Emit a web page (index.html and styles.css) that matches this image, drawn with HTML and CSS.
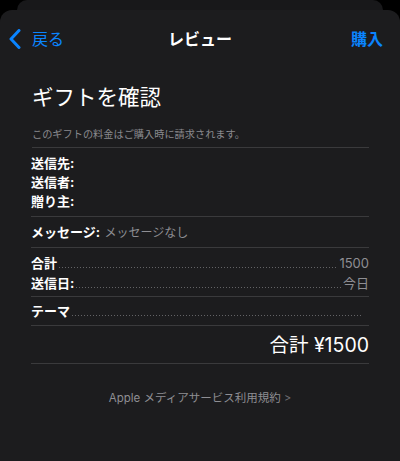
FILE: index.html
```html
<!DOCTYPE html>
<html lang="ja">
<head>
<meta charset="utf-8">
<link rel="stylesheet" href="styles.css">
</head>
<body>
<div class="backcard"></div>
<div class="sheet">
  <nav class="nav">
    <div class="back">
      <svg class="chev" width="12" height="20" viewBox="0 0 12 20"><path d="M10 1.5 L2 10 L10 18.5" fill="none" stroke="#0a84ff" stroke-width="3" stroke-linecap="round" stroke-linejoin="round"/></svg>
      <span>戻る</span>
    </div>
    <div class="title">レビュー</div>
    <div class="buy">購入</div>
  </nav>
  <main class="content">
    <h1 class="heading">ギフトを確認</h1>
    <p class="note">このギフトの料金はご購入時に請求されます。</p>
    <section class="sec sec-people">
      <div class="lbl">送信先:</div>
      <div class="lbl">送信者:</div>
      <div class="lbl">贈り主:</div>
    </section>
    <section class="sec sec-msg">
      <span class="lbl">メッセージ:</span> <span class="val">メッセージなし</span>
    </section>
    <section class="sec sec-price">
      <div class="lead"><span class="lbl">合計</span><span class="dots"></span><span class="val">1500</span></div>
      <div class="lead"><span class="lbl">送信日:</span><span class="dots"></span><span class="val">今日</span></div>
    </section>
    <section class="sec sec-theme">
      <div class="lead"><span class="lbl">テーマ</span><span class="dots short"></span></div>
    </section>
    <section class="sec sec-total">
      <div class="total">合計 ¥1500</div>
    </section>
    <footer class="terms">Apple メディアサービス利用規約 <span class="arr">&gt;</span></footer>
  </main>
</div>
</body>
</html>
```
FILE: styles.css
```css
html, body {
  margin: 0;
  padding: 0;
  background: #000;
  font-family: Inter, "Noto Sans CJK JP", sans-serif;
  color: #fff;
}
.backcard {
  height: 10px;
  margin: 0 17px;
  background: #18181a;
  border-radius: 10px 10px 0 0;
}
.sheet {
  height: 451px;
  background: #1c1c1e;
  border-radius: 12px 12px 0 0;
  overflow: hidden;
}
.nav {
  margin-top: 10px;
  height: 38px;
  display: flex;
  align-items: center;
  justify-content: space-between;
  padding: 0 17px 0 9px;
  position: relative;
  font-size: 16px;
  line-height: 20px;
}
.back {
  display: flex;
  align-items: center;
  gap: 11px;
  color: #0a84ff;
}
.chev { display: block; }
.title {
  position: absolute;
  left: 0;
  right: 0;
  text-align: center;
  font-weight: 700;
  pointer-events: none;
}
.buy {
  color: #0a84ff;
  font-weight: 700;
}
.content {
  padding: 0 31px;
}
.heading {
  margin: 24px 0 0 1px;
  font-size: 21.5px;
  line-height: 30px;
  font-weight: 400;
}
.note {
  margin: 14px 0 0 1px;
  font-size: 10.2px;
  line-height: 16px;
  color: #8a8a8e;
  padding-bottom: 5px;
  border-bottom: 1px solid #3a3a3c;
}
.sec {
  border-bottom: 1px solid #3a3a3c;
}
.lbl {
  font-weight: 700;
  font-size: 13px;
}
.val {
  color: #8e8e93;
  font-size: 12.5px;
}
.sec-people {
  padding: 6px 0 5px;
  line-height: 19px;
}
.sec-msg {
  padding: 5px 0 5px;
  line-height: 19px;
}
.sec-msg .val { font-size: 12px; }
.sec-price {
  padding: 5px 0 3px;
  line-height: 20px;
}
.sec-price .val { font-size: 13px; }
.lead {
  display: flex;
  align-items: baseline;
}
.dots {
  flex: 1;
  height: 1px;
  margin: 0 2px;
  background-image: linear-gradient(to right, #636366 1px, transparent 1px);
  background-size: 3px 1px;
  background-repeat: repeat-x;
}
.dots.short { margin-right: 6px; }
.sec-theme {
  padding: 5px 0 4px;
  line-height: 19px;
}
.sec-total {
  padding: 6px 0 5px;
  text-align: right;
}
.total {
  font-size: 19.5px;
  line-height: 26px;
}
.terms {
  margin-top: 26px;
  text-align: center;
  font-size: 11.5px;
  line-height: 16px;
  color: #8e8e93;
}
.arr {
  font-size: 11px;
  color: #6e6e73;
}
```
